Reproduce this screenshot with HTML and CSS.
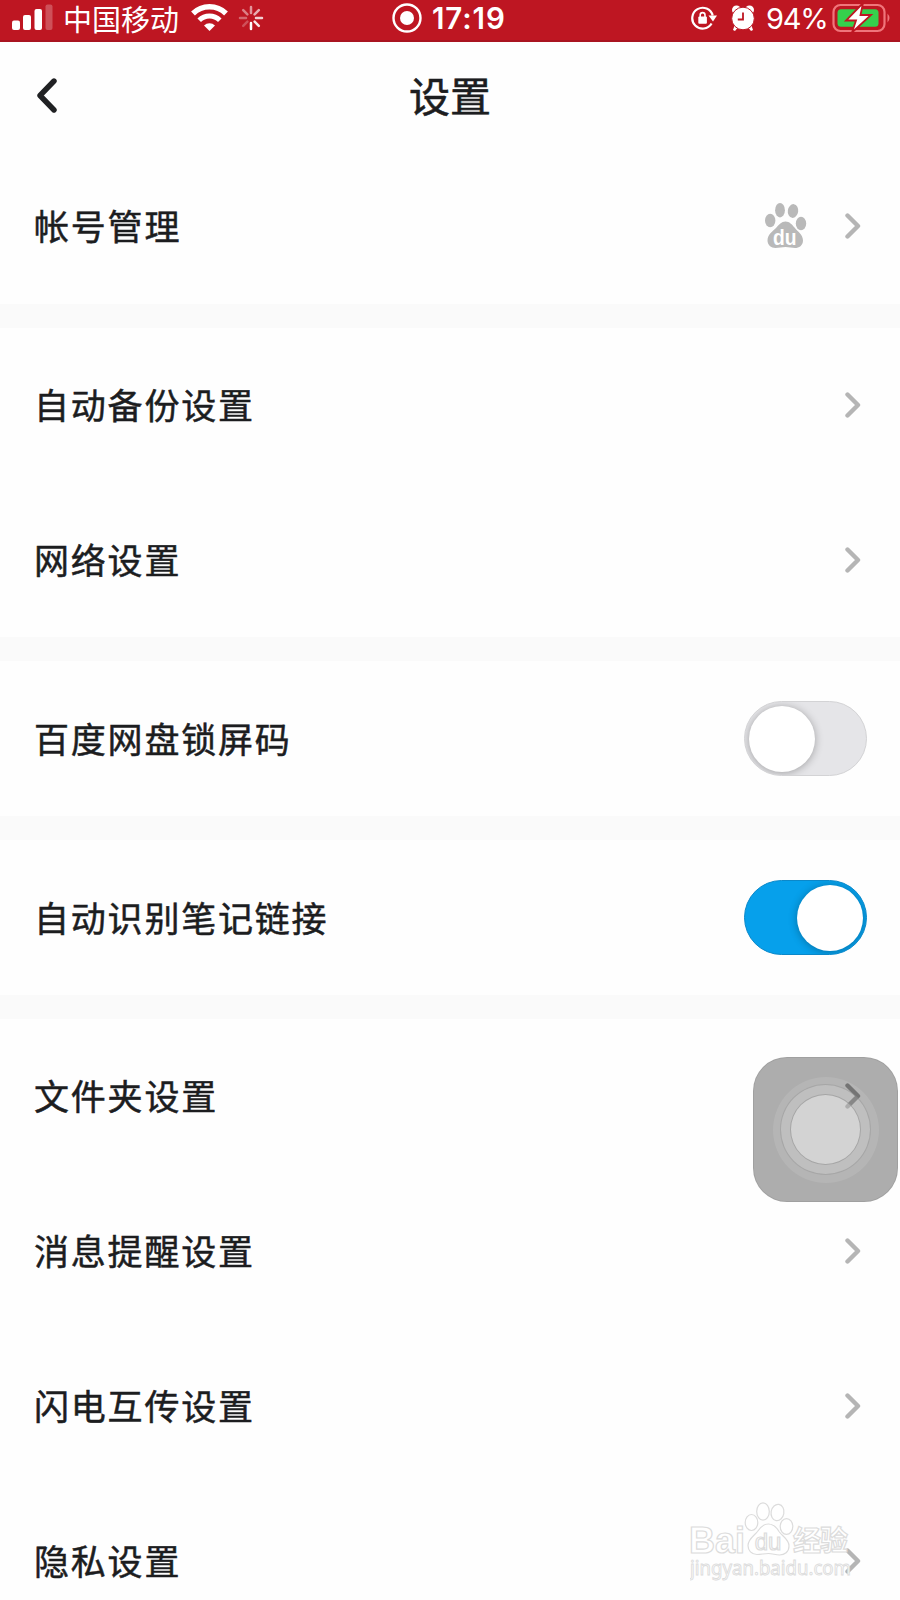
FILE: index.html
```html
<!DOCTYPE html>
<html lang="zh-CN">
<head>
    <meta charset="UTF-8">
    <meta name="viewport" content="width=device-width, initial-scale=1.0">
    <title>设置</title>
    <link rel="stylesheet" href="styles.css">
</head>
<body>

    <!-- Iconos compartidos -->
    <svg class="defs" width="0" height="0">
        <symbol id="arrow" viewBox="0 0 16 26">
            <path d="M2.5 2.5L13 13L2.5 23.5" fill="none" stroke="currentColor" stroke-width="4.4" stroke-linecap="round" stroke-linejoin="round"/>
        </symbol>
    </svg>

    <div class="status-bar">
        <div class="status-left">
            <svg class="signal" width="41" height="22" viewBox="0 0 41 22" fill="#fff">
                <rect x="0" y="12.5" width="8" height="9.5" rx="2"/>
                <rect x="11" y="7" width="8" height="15" rx="2"/>
                <rect x="22.5" y="1" width="7.5" height="21" rx="2"/>
                <rect x="33.5" y="-3.5" width="7" height="25.5" rx="2" opacity=".25"/>
            </svg>
            <span class="carrier">中国移动</span>
            <svg class="wifi" width="37" height="28" viewBox="0 0 37 28" fill="none" stroke="#fff">
                <path d="M2 9.5A23.5 23.5 0 0 1 35 9.5" stroke-width="5.4"/>
                <path d="M8.2 16.3A14.5 14.5 0 0 1 28.8 16.3" stroke-width="5"/>
                <path d="M18.5 27L13 21.4A7.8 7.8 0 0 1 24 21.4Z" fill="#fff" stroke="none"/>
            </svg>
            <svg class="spinner" width="26" height="26" viewBox="0 0 26 26" fill="none" stroke="#fff" stroke-width="2.5" stroke-linecap="round">
                <path d="M13 2v6" opacity=".55"/>
                <path d="M20.8 5.2l-4.2 4.2" opacity=".65"/>
                <path d="M24 13h-6" opacity=".8"/>
                <path d="M20.8 20.8l-4.2-4.2" opacity=".9"/>
                <path d="M13 24v-6"/>
                <path d="M5.2 20.8l4.2-4.2" opacity=".25"/>
                <path d="M2 13h6" opacity=".35"/>
                <path d="M5.2 5.2l4.2 4.2" opacity=".45"/>
            </svg>
        </div>
        <div class="status-center">
            <svg width="30" height="30" viewBox="0 0 30 30">
                <circle cx="15" cy="15" r="13.5" fill="none" stroke="#fff" stroke-width="2.4"/>
                <circle cx="15" cy="15" r="7" fill="#fff"/>
            </svg>
            <span class="time">17:19</span>
        </div>
        <div class="status-right">
            <svg class="lock" width="26" height="24" viewBox="0 0 26 24" fill="none" stroke="#fff" stroke-width="2.2">
                <path d="M21.7 9.5A10.4 10.4 0 1 0 20.6 17.5"/>
                <path d="M17.5 9.5h8.5l-4 6z" fill="#fff" stroke="none"/>
                <rect x="7.3" y="10.5" width="8.6" height="7.3" rx="1" fill="#fff" stroke="none"/>
                <path d="M9.2 11V9a2.4 2.4 0 0 1 4.8 0v2" stroke-width="1.6"/>
            </svg>
            <svg class="alarm" width="24" height="26" viewBox="0 0 24 26">
                <g fill="#fff">
                    <circle cx="5.5" cy="5" r="4.5"/>
                    <circle cx="18.5" cy="5" r="4.5"/>
                    <path d="M4 19l4 2-4 5-2-1zM20 19l-4 2 4 5 2-1z"/>
                </g>
                <circle cx="12" cy="13.5" r="11.3" fill="#fff" stroke="#be1622" stroke-width="1"/>
                <path d="M12 7.5v7H6.8" fill="none" stroke="#be1622" stroke-width="1.8"/>
            </svg>
            <span class="percent">94%</span>
            <svg class="battery" width="60" height="30" viewBox="0 0 60 30">
                <rect x="1.5" y="2" width="51" height="26" rx="7" fill="none" stroke="#f0757b" stroke-width="2.2"/>
                <path d="M55.5 10.5q4 4.5 0 9z" fill="#f0757b"/>
                <rect x="5.5" y="6.3" width="41" height="17.5" rx="3.5" fill="#35d04c"/>
                <path d="M31 0L14 17.5h10l-4 12L39 12H28.5z" fill="#fff" stroke="#be1622" stroke-width="1.8"/>
            </svg>
        </div>
    </div>

    <div class="header">
        <svg class="back" width="20" height="35" viewBox="0 0 20 35">
            <path d="M17 3L3 17.5L17 32" fill="none" stroke="#202123" stroke-width="5.4" stroke-linecap="round" stroke-linejoin="round"/>
        </svg>
        <h1>设置</h1>
    </div>

    <div class="group">
        <div class="row">
            <span class="label">帐号管理</span>
            <svg class="paw" width="42" height="46" viewBox="0 0 42 46">
                <g fill="#b9b9b9">
                    <ellipse cx="5.2" cy="17.5" rx="5.2" ry="6.8"/>
                    <ellipse cx="15" cy="7.2" rx="4.9" ry="7.2"/>
                    <ellipse cx="28" cy="8" rx="5.2" ry="6.9" transform="rotate(8 28 8)"/>
                    <ellipse cx="36" cy="20.5" rx="5.2" ry="6.8"/>
                    <path d="M20.5 18.5c4 0 6.5 3 9 6 3 4 8.500 7 8.500 13 0 5-4 7.500-8 7.500-3 0-6-1-9.500-1s-6.500 1-10 1c-4.500 0-8-3-8-7.500 0-6 5-9 8.500-12.500 3-3.500 5.500-6.500 9.500-6.500z"/>
                </g>
                <text x="8" y="41.5" textLength="23.5" lengthAdjust="spacingAndGlyphs" class="paw-text">du</text>
            </svg>
            <svg class="arrow"><use href="#arrow"/></svg>
        </div>
    </div>

    <div class="group">
        <div class="row">
            <span class="label">自动备份设置</span>
            <svg class="arrow"><use href="#arrow"/></svg>
        </div>
        <div class="row">
            <span class="label">网络设置</span>
            <svg class="arrow"><use href="#arrow"/></svg>
        </div>
    </div>

    <div class="group">
        <div class="row">
            <span class="label">百度网盘锁屏码</span>
            <div class="switch"><div class="knob"></div></div>
        </div>
    </div>

    <div class="group">
        <div class="row">
            <span class="label">自动识别笔记链接</span>
            <div class="switch on"><div class="knob"></div></div>
        </div>
    </div>

    <div class="group">
        <div class="row">
            <span class="label">文件夹设置</span>
            <svg class="arrow dark"><use href="#arrow"/></svg>
        </div>
        <div class="row">
            <span class="label">消息提醒设置</span>
            <svg class="arrow"><use href="#arrow"/></svg>
        </div>
        <div class="row">
            <span class="label">闪电互传设置</span>
            <svg class="arrow"><use href="#arrow"/></svg>
        </div>
        <div class="row">
            <span class="label">隐私设置</span>
            <svg class="arrow"><use href="#arrow"/></svg>
        </div>
    </div>

    <!-- Botón flotante AssistiveTouch -->
    <div class="assistive">
        <div class="ring"><div class="ring-middle"><div class="ring-inner"></div></div></div>
    </div>

    <!-- Marca de agua -->
    <svg class="watermark" width="180" height="84" viewBox="0 0 180 84">
        <g fill="#fff" stroke="#dcdcdc" stroke-width="1.2">
            <text x="-1" y="51" class="wm-brand" textLength="56" lengthAdjust="spacingAndGlyphs">Bai</text>
            <ellipse cx="61.5" cy="20.5" rx="6.3" ry="8"/>
            <ellipse cx="73" cy="9.5" rx="6.3" ry="8.7"/>
            <ellipse cx="87.5" cy="10.5" rx="6.4" ry="8.2" transform="rotate(10 87.5 10.5)"/>
            <ellipse cx="96.5" cy="24.5" rx="6.3" ry="7.8"/>
            <path d="M78.5 22c5 0 8 3.500 10.500 7.500 3.500 5 10 7.500 10 14.500 0 6-4.500 9-9.500 9-4 0-7-1.500-11-1.500s-7.500 1-11.500 1c-5.500 0-9-4-9-9 0-6.500 6-9.500 9.500-14 2.500-4 6-7.500 11-7.500z"/>
            <text x="78" y="47.5" text-anchor="middle" class="wm-du">du</text>
            <text x="103" y="49" class="wm-cn" textLength="55">经验</text>
        </g>
        <text x="0" y="73" class="wm-url" textLength="161" lengthAdjust="spacingAndGlyphs">jingyan.baidu.com</text>
    </svg>

</body>
</html>
```
FILE: styles.css
```css
* { box-sizing: border-box; }

body {
    position: relative;
    margin: 0;
    width: 900px;
    height: 1600px;
    overflow: hidden;
    background-color: #fefefe;
    font-family: "Liberation Sans", "Noto Sans CJK SC", sans-serif;
    color: #1c1d1f;
}

.defs { display: block; }

/* Barra de estado */
.status-bar {
    display: grid;
    grid-template-columns: 392px 1fr 230px;
    height: 42px;
    background-color: #be1622;
    border-bottom: 2px solid #a91420;
    color: #fff;
}
.status-left, .status-center, .status-right {
    display: flex;
    align-items: center;
    height: 36px;
}
.status-left { padding-left: 12px; }
.signal { overflow: visible; margin-top: 2px; }
.carrier {
    margin-left: 10px;
    width: 118px;
    font-family: "Noto Sans CJK SC", sans-serif;
    font-size: 29px;
    line-height: 36px;
    white-space: nowrap;
}
.wifi { margin-left: 10px; }
.spinner { margin-left: 10px; }
.time {
    margin-left: 10px;
    font-family: Inter, sans-serif;
    font-size: 29.5px;
    font-weight: 600;
    letter-spacing: 0.9px;
}
.status-right { padding-left: 21px; }
.alarm { margin-left: 14px; }
.percent {
    margin-left: 11px;
    width: 63px;
    font-family: Inter, sans-serif;
    font-size: 29px;
    letter-spacing: -1.2px;
}
.battery { margin-left: 3px; }

/* Cabecera */
.header {
    display: grid;
    grid-template-columns: 100px 1fr 100px;
    align-items: center;
    height: 107px;
}
.back { margin: -1px 0 0 37px; }
.header h1 {
    margin: 0;
    padding-top: 5px;
    text-align: center;
    font-size: 41px;
    font-weight: normal;
    line-height: 60px;
    -webkit-text-stroke: 0.6px #1c1d1f;
}

/* Lista */
.group + .group { border-top: 24px solid #fafafa; }
.row {
    display: flex;
    align-items: center;
    height: 154.8px;
    padding: 0 33px 0 34px;
}
.label {
    flex: 1;
    padding-top: 4px;
    font-size: 35px;
    letter-spacing: 1.8px;
    line-height: 50px;
    -webkit-text-stroke: 0.5px #1c1d1f;
}
.arrow {
    width: 16px;
    height: 26px;
    margin-right: 6px;
    color: #b5b5b5;
}
.arrow.dark { color: #707070; }
.paw { margin: -1px 38px 0 0; }
.paw-text {
    font-family: "Liberation Sans", sans-serif;
    font-size: 22.5px;
    font-weight: bold;
    fill: #fff;
}

/* Interruptores */
.switch {
    display: flex;
    width: 123px;
    height: 75px;
    padding: 3.5px;
    border: 1px solid #d3d3d5;
    border-radius: 38px;
    background-color: #e5e5e8;
    overflow: hidden;
}
.knob {
    width: 66px;
    height: 66px;
    border-radius: 50%;
    background-color: #fff;
    box-shadow: 0 1px 8px rgba(0, 0, 0, 0.3);
}
.switch.on {
    justify-content: flex-end;
    border-color: #0b88c9;
    background-color: #06a0eb;
}

.assistive {
    position: absolute;
    left: 753px;
    top: 1057px;
    display: flex;
    align-items: center;
    justify-content: center;
    width: 145px;
    height: 145px;
    border: 1px solid rgba(140, 140, 140, 0.4);
    border-radius: 34px;
    background-color: rgba(90, 90, 90, 0.49);
}
.ring, .ring-middle, .ring-inner {
    display: flex;
    align-items: center;
    justify-content: center;
    border-radius: 50%;
}
.ring { width: 106px; height: 106px; background-color: rgba(255, 255, 255, 0.1); }
.ring-middle {
    width: 91px;
    height: 91px;
    border: 1px solid rgba(120, 120, 120, 0.35);
    background-color: rgba(255, 255, 255, 0.14);
}
.ring-inner {
    width: 71px;
    height: 71px;
    border: 1px solid rgba(120, 120, 120, 0.5);
    background-color: rgba(255, 255, 255, 0.32);
}

.watermark { position: absolute; left: 690px; top: 1502px; }
.wm-brand { font-family: "Liberation Sans", sans-serif; font-size: 37px; font-weight: bold; }
.wm-du { font-family: "Liberation Sans", sans-serif; font-size: 24px; }
.wm-cn { font-family: "Noto Sans CJK SC", sans-serif; font-size: 28px; font-weight: bold; }
.wm-url {
    font-family: "Noto Sans", sans-serif;
    font-size: 19px;
    fill: #fff;
    stroke: #dcdcdc;
    stroke-width: 0.9px;
}
```
